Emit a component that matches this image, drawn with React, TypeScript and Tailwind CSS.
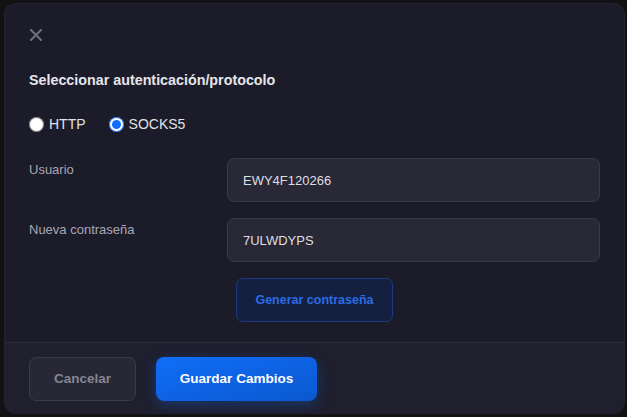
import React, { useState } from 'react'

const font = { fontFamily: '"Liberation Sans", Arial, sans-serif' }

export default function App() {
  const [protocol, setProtocol] = useState<'http' | 'socks5'>('socks5')
  const [user, setUser] = useState('EWY4F120266')
  const [password, setPassword] = useState('7ULWDYPS')

  return (
    <div
      className="w-[627px] h-[417px] bg-[#121214] pl-[4px] pr-[2px] pt-[3px] pb-[3px] font-['Liberation_Sans',Arial,sans-serif]"
      style={font}
    >
      <div className="flex h-full flex-col overflow-hidden rounded-[12px] bg-[#1b1b2a] border border-white/[0.03]">
        <div className="flex-1 px-[24px] pt-[25px] pb-[20px]">
          <button className="ml-[1px] flex h-[12px] w-[12px] items-center justify-center text-[#6f6f78]" aria-label="Cerrar">
            <svg width="12" height="12" viewBox="0 0 12 12" fill="none">
              <path d="M1 1L11 11M11 1L1 11" stroke="currentColor" strokeWidth="2" strokeLinecap="square" />
            </svg>
          </button>

          <h2 className="mt-[31px] text-[14.3px] leading-[16px] font-bold text-[#e6e6ea]">
            Seleccionar autenticación/protocolo
          </h2>

          <div className="mt-[26px] flex h-[20px] items-center gap-[23px]">
            <label className="flex items-center gap-[5px] text-[14px] text-[#e2e2e6]">
              <input
                type="radio"
                name="protocol"
                checked={protocol === 'http'}
                onChange={() => setProtocol('http')}
                className="m-0 h-[15px] w-[15px] accent-[#0d6efd]"
              />
              HTTP
            </label>
            <label className="flex items-center gap-[5px] text-[14px] text-[#e2e2e6]">
              <input
                type="radio"
                name="protocol"
                checked={protocol === 'socks5'}
                onChange={() => setProtocol('socks5')}
                className="m-0 h-[15px] w-[15px] accent-[#0d6efd]"
              />
              SOCKS5
            </label>
          </div>

          <div className="mt-[24px] grid grid-cols-[198px_373px] gap-y-[16px]">
            <label className="pt-[4px] text-[13px] leading-[16px] text-[#a8a8b2]">Usuario</label>
            <input
              value={user}
              onChange={(e) => setUser(e.target.value)}
              className="h-[44px] rounded-[7px] border border-[#393947] bg-[#292836] px-[15px] text-[13px] text-[#dedee2] outline-none"
            />
            <label className="pt-[4px] text-[13px] leading-[16px] text-[#a8a8b2]">Nueva contraseña</label>
            <input
              value={password}
              onChange={(e) => setPassword(e.target.value)}
              className="h-[44px] rounded-[7px] border border-[#393947] bg-[#292836] px-[15px] text-[13px] text-[#dedee2] outline-none"
            />
            <div />
            <div className="pl-[9px]">
              <button className="h-[44px] w-[157px] rounded-[7px] border border-[#1c3a80] bg-[#151f3f] text-[12.5px] font-bold text-[#2a6ce6]">
                Generar contraseña
              </button>
            </div>
          </div>
        </div>

        <div className="flex gap-[20px] border-t border-[#2c2c3a] bg-[#1f1f2e] px-[24px] pt-[14px] pb-[12px]">
          <button className="h-[44px] w-[107px] rounded-[7px] border border-[#393947] bg-[#272735] text-[13.5px] font-bold text-[#85858f]">
            Cancelar
          </button>
          <button className="h-[44px] w-[161px] rounded-[8px] bg-gradient-to-br from-[#106ef7] to-[#0b58d0] text-[13.5px] font-bold text-white shadow-[0_4px_14px_rgba(13,110,253,0.3)]">
            Guardar Cambios
          </button>
        </div>
      </div>
    </div>
  )
}
